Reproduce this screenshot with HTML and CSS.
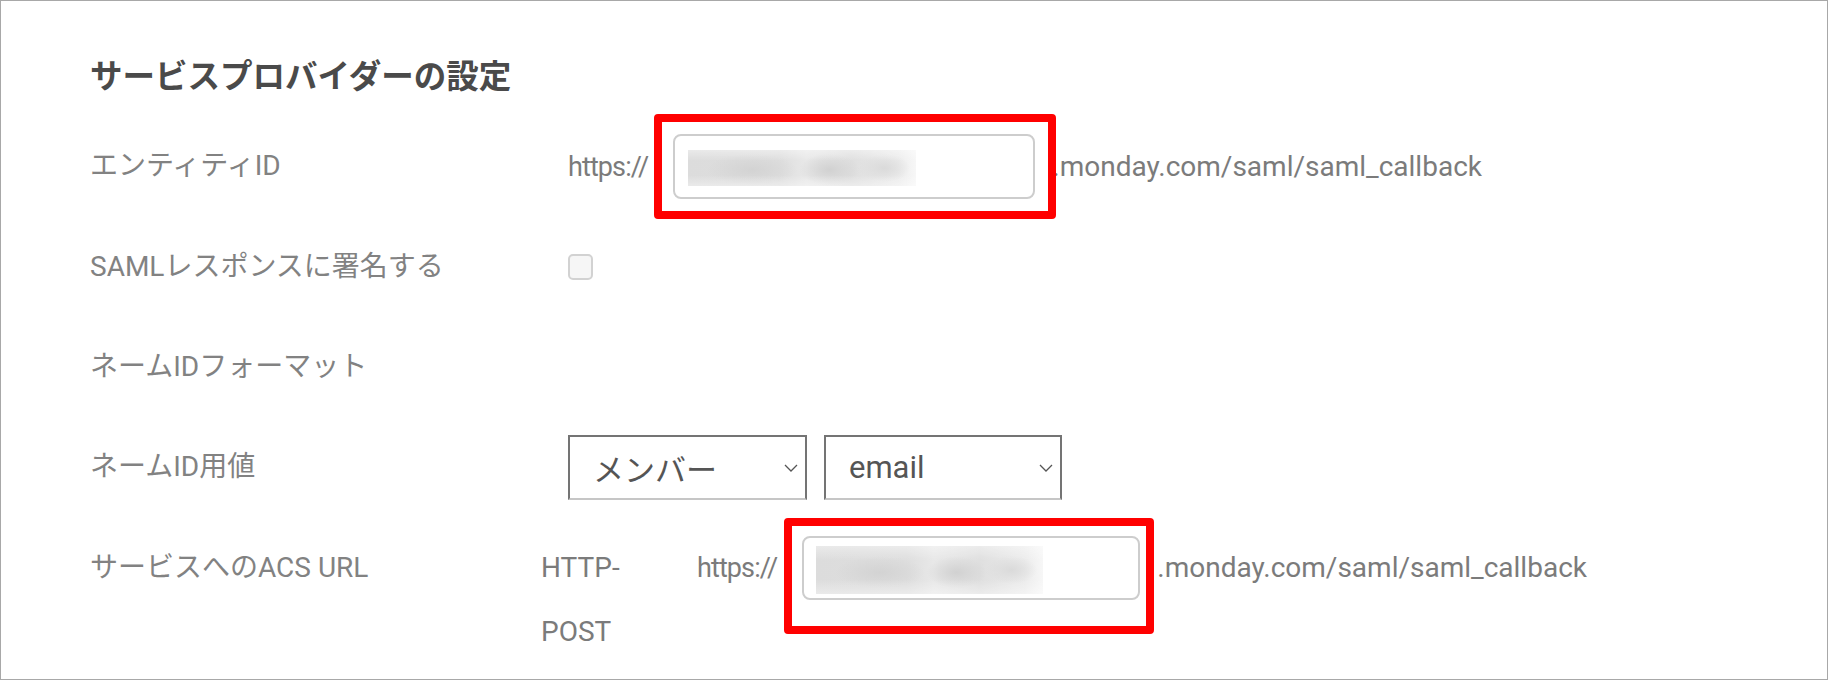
FILE: index.html
```html
<!DOCTYPE html>
<html lang="ja">
<head>
  <meta charset="UTF-8">
  <title>サービスプロバイダーの設定</title>
  <link rel="stylesheet" href="styles.css">
</head>
<body>
  <div class="panel">
    <h2>サービスプロバイダーの設定</h2>

    <div class="row">
      <div class="label">エンティティID</div>
      <div class="value">
        <span class="url url-pre">https://</span>
        <div class="field field-entity">
          <span class="blur blur-entity"></span>
          <span class="mark mark-entity"></span>
        </div>
        <span class="url">.monday.com/saml/saml_callback</span>
      </div>
    </div>

    <div class="row">
      <div class="label">SAMLレスポンスに署名する</div>
      <div class="value">
        <span class="check"></span>
      </div>
    </div>

    <div class="row">
      <div class="label">ネームIDフォーマット</div>
      <div class="value"></div>
    </div>

    <div class="row">
      <div class="label">ネームID用値</div>
      <div class="value">
        <div class="select">
          <span>メンバー</span>
          <svg width="14" height="8" viewBox="0 0 14 8"><polyline points="1,1 7,7 13,1" fill="none" stroke="#555" stroke-width="1.3"/></svg>
        </div>
        <div class="select select-email">
          <span>email</span>
          <svg width="14" height="8" viewBox="0 0 14 8"><polyline points="1,1 7,7 13,1" fill="none" stroke="#555" stroke-width="1.3"/></svg>
        </div>
      </div>
    </div>

    <div class="row row-acs">
      <div class="label">サービスへのACS URL</div>
      <div class="binding">HTTP-<wbr>POST</div>
      <div class="value">
        <span class="url url-pre">https://</span>
        <div class="field field-acs">
          <span class="blur blur-acs"></span>
          <span class="mark mark-acs"></span>
        </div>
        <span class="url">.monday.com/saml/saml_callback</span>
      </div>
    </div>
  </div>
</body>
</html>
```

FILE: styles.css
```css
body {
  margin: 0;
  background: #fff;
  font-family: Roboto, "Noto Sans CJK JP", sans-serif;
}
.panel {
  box-sizing: border-box;
  height: 680px;
  border: 1px solid #a8a8a8;
  padding: 56px 0 0 89px;
}
h2 {
  margin: 0 0 37px 0;
  font-size: 32.5px;
  line-height: 40px;
  font-weight: 700;
  color: #4a4a4a;
}
.row {
  display: flex;
  align-items: flex-start;
  margin-bottom: 36px;
}
.label {
  flex: 0 0 478px;
  font-size: 28px;
  line-height: 64px;
  color: #828282;
}
.value {
  display: flex;
  align-items: center;
  min-height: 64px;
}
.url {
  font-size: 28px;
  line-height: 64px;
  color: #7b7b7b;
  white-space: nowrap;
}
.url-pre {
  font-size: 27px;
  letter-spacing: -0.9px;
}

/* blurred input boxes */
.field {
  position: relative;
  box-sizing: border-box;
  border: 2px solid #cdcdcd;
  border-radius: 8px;
  margin: 0 17px 0 25px;
  background: #fff;
}
.field-entity { width: 362px; height: 65px; }
.field-acs { width: 338px; height: 64px; }
.blur {
  display: block;
  background:
    linear-gradient(180deg, rgba(255,255,255,0.4) 0%, rgba(255,255,255,0) 30%, rgba(255,255,255,0) 70%, rgba(255,255,255,0.4) 100%),
    radial-gradient(ellipse 45px 16px at 28% 55%, #d3d3d3, rgba(211,211,211,0)),
    radial-gradient(ellipse 30px 16px at 62% 55%, #d1d1d1, rgba(209,209,209,0)),
    radial-gradient(ellipse 26px 14px at 86% 50%, #dadada, rgba(218,218,218,0)),
    linear-gradient(90deg, #dcdcdc 0%, #dedede 40%, #e8e8e8 52%, #dfdfdf 72%, #ececec 92%, #f7f7f7 100%);
}
.blur-entity { width: 228px; height: 36px; margin: 14px 0 0 13px; }
.blur-acs { width: 227px; height: 48px; margin: 8px 0 0 12px; }

/* red annotation frames */
.mark {
  position: absolute;
  box-sizing: border-box;
  border: 8px solid #ff0000;
  border-radius: 4px;
}
.mark-entity { left: -21px; top: -22px; width: 402px; height: 105px; }
.mark-acs { left: -20px; top: -20px; width: 370px; height: 116px; }

.check {
  box-sizing: border-box;
  width: 25px;
  height: 26px;
  border: 2px solid #d2d2d2;
  border-radius: 5px;
  background: #f6f6f6;
}

.select {
  box-sizing: border-box;
  width: 239px;
  height: 65px;
  border: 2px solid #747474;
  border-bottom-color: #c6c6c6;
  display: flex;
  align-items: center;
  justify-content: space-between;
  padding: 0 7px 0 23px;
  font-size: 31px;
  color: #555;
}
.select-email {
  width: 238px;
  margin-left: 17px;
}

.row-acs .label { flex-basis: 451px; }
.binding {
  flex: 0 0 156px;
  box-sizing: border-box;
  padding-right: 40px;
  font-size: 28px;
  line-height: 64px;
  color: #7b7b7b;
}
```
